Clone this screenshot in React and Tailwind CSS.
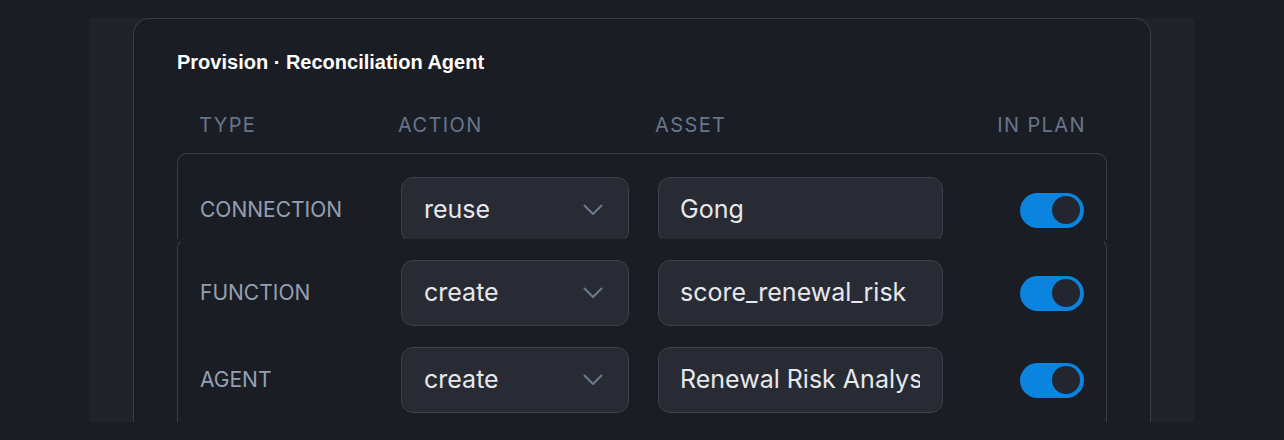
const rows = [
  { type: 'CONNECTION', action: 'reuse', asset: 'Gong', on: true },
  { type: 'FUNCTION', action: 'create', asset: 'score_renewal_risk', on: true },
  { type: 'AGENT', action: 'create', asset: 'Renewal Risk Analyst', on: true },
];

function Chevron() {
  return (
    <svg width="20" height="12" viewBox="0 0 20 12" fill="none" className="text-[#6b7a90]">
      <polyline
        points="1.5,1.5 10,10 18.5,1.5"
        stroke="currentColor"
        strokeWidth="2"
        strokeLinecap="round"
        strokeLinejoin="round"
      />
    </svg>
  );
}

function Toggle({ on }) {
  return (
    <div
      className={`flex h-[35px] w-[64px] items-center rounded-full px-[4px] ${
        on ? 'justify-end bg-[#0a84df]' : 'justify-start bg-[#3a3e48]'
      }`}
    >
      <div className="h-[28px] w-[28px] rounded-full bg-[#23262e]" />
    </div>
  );
}

function Row({ row }) {
  return (
    <div className="flex h-[66px] shrink-0 items-center">
      <div className="w-[201px] text-[21px] text-[#94a0b2]">{row.type}</div>
      {/* Action select */}
      <div className="flex h-[66px] w-[228px] items-center justify-between rounded-[12px] border border-[#3c404a] bg-[#282b34] pl-[22px] pr-[25px]">
        <span className="text-[25px] text-[#e6e8ec]">{row.action}</span>
        <Chevron />
      </div>
      {/* Asset input */}
      <div className="ml-[29px] flex h-[66px] w-[285px] items-center rounded-[12px] border border-[#3c404a] bg-[#282b34] pl-[21px] pr-[22px]">
        <div className="flex-1 overflow-hidden whitespace-nowrap text-[25px] text-[#e6e8ec]">{row.asset}</div>
      </div>
      <div className="flex flex-1 justify-end">
        <Toggle on={row.on} />
      </div>
    </div>
  );
}

export default function App() {
  return (
    <div
      className="h-[440px] w-[1284px] overflow-hidden bg-[#1b1d24] pt-[18px]"
      style={{ fontFamily: 'Inter, "Noto Sans", sans-serif' }}
    >
      <div className="ml-[89px] h-[404px] w-[1106px] overflow-hidden bg-[#202329] px-[44px]">
        {/* Card */}
        <div className="h-[440px] rounded-t-[16px] border-x border-t border-[#3a3d46] bg-[#1b1d24] pl-[43px] pr-[43px] pt-[30px]">
          <h1
            className="text-[20px] font-bold leading-[26px] text-white"
            style={{ fontFamily: '"Liberation Sans", Arial, sans-serif' }}
          >
            Provision · Reconciliation Agent
          </h1>

          {/* Header */}
          <div className="mt-[36px] flex h-[28px] items-center px-[22px] text-[20px] tracking-[0.07em] text-[#66758c]">
            <div className="w-[199px]">TYPE</div>
            <div className="w-[257px]">ACTION</div>
            <div>ASSET</div>
            <div className="ml-auto mr-[-1px]">IN PLAN</div>
          </div>

          {/* First row, clipped */}
          <div className="mt-[14px] h-[86px] overflow-hidden rounded-t-[10px] border-x border-t border-[#3b3f48] px-[22px] pt-[23px]">
            <Row row={rows[0]} />
          </div>

          {/* Remaining rows */}
          <div className="-mt-[1px] flex h-[200px] flex-col gap-[21px] rounded-t-[10px] border-x border-t border-[#3b3f48] border-t-transparent px-[22px] pt-[21px]">
            {rows.slice(1).map((r) => (
              <Row key={r.type} row={r} />
            ))}
          </div>
        </div>
      </div>
    </div>
  );
}
